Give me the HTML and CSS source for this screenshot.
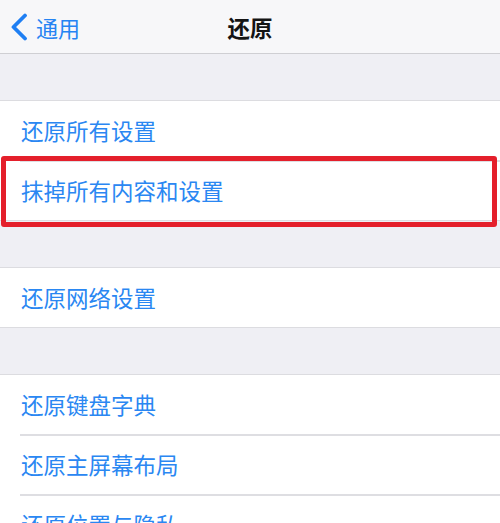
FILE: index.html
```html
<!DOCTYPE html>
<html lang="zh-CN">
<head>
<meta charset="utf-8">
<title>还原</title>
<link rel="stylesheet" href="styles.css">
</head>
<body>
<div class="screen">
  <header class="nav">
    <div class="back">
      <svg class="chev" width="18" height="28" viewBox="0 0 18 28" aria-hidden="true">
        <path d="M15 2.5 L3.5 14 L15 25.5" fill="none" stroke="#1f7ff3" stroke-width="3.8" stroke-linecap="round" stroke-linejoin="round"/>
      </svg>
      <span class="back-label">通用</span>
    </div>
    <div class="title">还原</div>
  </header>

  <div class="gap gap-first"></div>
  <section class="group">
    <div class="row"><span class="label">还原所有设置</span></div>
    <div class="row highlighted"><span class="label">抹掉所有内容和设置</span><span class="mark"></span></div>
  </section>

  <div class="gap"></div>
  <section class="group">
    <div class="row"><span class="label">还原网络设置</span></div>
  </section>

  <div class="gap"></div>
  <section class="group">
    <div class="row"><span class="label">还原键盘字典</span></div>
    <div class="row"><span class="label">还原主屏幕布局</span></div>
    <div class="row"><span class="label">还原位置与隐私</span></div>
  </section>
</div>
</body>
</html>
```

FILE: styles.css
```css
html, body {
  margin: 0;
  padding: 0;
  background: #efeff4;
}

.screen {
  width: 500px;
  height: 523px;
  overflow: hidden;
  font-family: "Noto Sans CJK SC", "Noto Sans", sans-serif;
  background: #efeff4;
}

.nav {
  height: 53px;
  background: #f7f7f9;
  border-bottom: 1.5px solid #cfcfd3;
  display: flex;
  align-items: center;
  position: relative;
}

.back {
  display: flex;
  align-items: center;
  padding-left: 10px;
  gap: 8px;
  color: #2584f3;
}

.chev {
  display: block;
  margin-top: 1px;
}

.back-label {
  font-size: 22px;
  line-height: 1;
}

.title {
  position: absolute;
  left: 0;
  right: 0;
  top: 0;
  height: 53px;
  display: flex;
  align-items: center;
  justify-content: center;
  font-size: 22.5px;
  font-weight: 600;
  color: #141414;
  pointer-events: none;
}

.gap {
  height: 46px;
}

.gap-first {
  height: 46px;
}

.group {
  background: #ffffff;
  border-top: 1px solid #dcdce0;
  border-bottom: 1px solid #dcdce0;
}

.row {
  height: 59px;
  display: flex;
  align-items: center;
  padding-left: 21px;
  position: relative;
  box-sizing: border-box;
}

.row + .row {
  border-top: 1px solid transparent;
  height: 60px;
}

.row + .row::before {
  content: "";
  position: absolute;
  left: 20px;
  right: 0;
  top: -1px;
  height: 1.5px;
  background: #dedee2;
}

.label {
  font-size: 22.5px;
  color: #2a87f2;
  line-height: 1;
}

.mark {
  position: absolute;
  left: 1px;
  right: 3px;
  top: -5px;
  bottom: -7px;
  border: 5px solid #e41f2b;
  border-radius: 3px;
  box-sizing: border-box;
}
```
